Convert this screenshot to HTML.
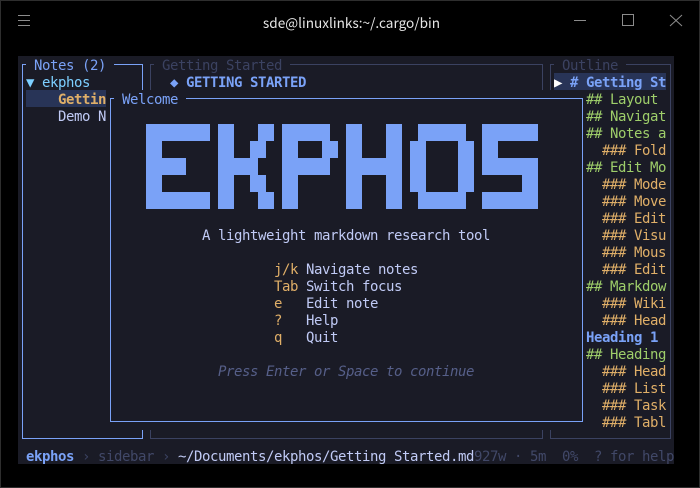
<!DOCTYPE html>
<html><head><meta charset="utf-8"><style>
html,body{margin:0;padding:0;background:#000}
#w{position:relative;width:700px;height:488px;background:#000;overflow:hidden}
#b{position:absolute;left:0;top:0;width:698px;height:486px;border:1px solid #2e2e2e}
#title{position:absolute;left:1.5px;width:700px;top:12px;text-align:center;color:#e6e6e6;font:13.6px/20px "Noto Sans CJK SC","DejaVu Sans",sans-serif}
#t{position:absolute;left:18px;top:56px;width:656px;height:408px;background:#1a1b26;font-family:"DejaVu Sans Mono",monospace;font-size:14px;letter-spacing:-0.43px;line-height:21px;color:#c0caf5}
#t i{position:absolute;display:block}
.x{white-space:pre;font-style:normal;font-weight:normal;height:17px}
.bd{font-weight:bold!important}
.bl{color:#7aa2f7}.g{color:#9ece6a}.o{color:#e0af68}.d{color:#3b4261}.m{color:#565f89}
.l{background:#7aa2f7}.k{background:#3b4261}.p{background:#7aa2f7}
</style></head><body><div id="w"><div id="b"></div>
<svg width="700" height="56" style="position:absolute;left:0;top:0" fill="none" stroke="#8c8c8c" stroke-width="1">
<path d="M18 15.5H30M18 20.5H30M18 25.5H30"/>
<path d="M574 20.5H586"/>
<path d="M622.5 14.5H633.5V25.5H622.5Z"/>
<path d="M670 15L682 26M682 15L670 26"/>
</svg>
<div id="title">sde@linuxlinks:~/.cargo/bin</div>
<div id="t">
<i class="l" style="left:4px;top:8px;width:1px;height:375px"></i>
<i class="l" style="left:4px;top:8px;width:4px;height:1px"></i>
<i class="l" style="left:96px;top:8px;width:29px;height:1px"></i>
<i class="l" style="left:124px;top:8px;width:1px;height:26px"></i>
<i class="l" style="left:4px;top:382px;width:121px;height:1px"></i>
<i class="l" style="left:124px;top:374px;width:1px;height:9px"></i>
<i class="k" style="left:132px;top:8px;width:1px;height:26px"></i>
<i class="k" style="left:132px;top:8px;width:4px;height:1px"></i>
<i class="k" style="left:272px;top:8px;width:253px;height:1px"></i>
<i class="k" style="left:524px;top:8px;width:1px;height:26px"></i>
<i class="k" style="left:132px;top:374px;width:1px;height:9px"></i>
<i class="k" style="left:132px;top:382px;width:393px;height:1px"></i>
<i class="k" style="left:524px;top:374px;width:1px;height:9px"></i>
<i class="k" style="left:532px;top:8px;width:1px;height:26px"></i>
<i class="k" style="left:532px;top:8px;width:4px;height:1px"></i>
<i class="k" style="left:608px;top:8px;width:45px;height:1px"></i>
<i class="k" style="left:652px;top:8px;width:1px;height:375px"></i>
<i class="k" style="left:532px;top:374px;width:1px;height:9px"></i>
<i class="k" style="left:532px;top:382px;width:121px;height:1px"></i>
<i style="left:8px;top:34px;width:80px;height:17px;background:#283457"></i>
<i style="left:536px;top:17px;width:112px;height:17px;background:#283457"></i>
<i class="x bl" style="left:16px;top:0">Notes (2)</i>
<i class="x d" style="left:144px;top:0">Getting Started</i>
<i class="x d" style="left:544px;top:0">Outline</i>
<i class="x" style="left:8px;top:17px;color:#7dcfff">▼</i>
<i class="x" style="left:24px;top:17px;color:#7dcfff">ekphos</i>
<i class="x o bd" style="left:40px;top:34px">Gettin</i>
<i class="x" style="left:40px;top:51px">Demo N</i>
<i class="x bl bd" style="left:152px;top:17px">◆</i>
<i class="x bl bd" style="left:168px;top:17px">GETTING STARTED</i>
<i class="x" style="left:536px;top:17px;color:#fff">▶</i>
<i class="x bl bd" style="left:552px;top:17px"># Getting St</i>
<i class="x g" style="left:568px;top:34px">## Layout</i>
<i class="x g" style="left:568px;top:51px">## Navigat</i>
<i class="x g" style="left:568px;top:68px">## Notes a</i>
<i class="x o" style="left:584px;top:85px">### Fold</i>
<i class="x g" style="left:568px;top:102px">## Edit Mo</i>
<i class="x o" style="left:584px;top:119px">### Mode</i>
<i class="x o" style="left:584px;top:136px">### Move</i>
<i class="x o" style="left:584px;top:153px">### Edit</i>
<i class="x o" style="left:584px;top:170px">### Visu</i>
<i class="x o" style="left:584px;top:187px">### Mous</i>
<i class="x o" style="left:584px;top:204px">### Edit</i>
<i class="x g" style="left:568px;top:221px">## Markdow</i>
<i class="x o" style="left:584px;top:238px">### Wiki</i>
<i class="x o" style="left:584px;top:255px">### Head</i>
<i class="x bl bd" style="left:568px;top:272px">Heading 1</i>
<i class="x g" style="left:568px;top:289px">## Heading</i>
<i class="x o" style="left:584px;top:306px">### Head</i>
<i class="x o" style="left:584px;top:323px">### List</i>
<i class="x o" style="left:584px;top:340px">### Task</i>
<i class="x o" style="left:584px;top:357px">### Tabl</i>
<i style="left:88px;top:34px;width:480px;height:340px;background:#1a1b26"></i>
<i class="l" style="left:92px;top:42px;width:1px;height:324px"></i>
<i class="l" style="left:92px;top:42px;width:4px;height:1px"></i>
<i class="l" style="left:168px;top:42px;width:397px;height:1px"></i>
<i class="l" style="left:564px;top:42px;width:1px;height:324px"></i>
<i class="l" style="left:92px;top:365px;width:473px;height:1px"></i>
<i class="x bl" style="left:104px;top:34px">Welcome</i>
<i class="p" style="left:128px;top:68px;width:64px;height:17px"></i>
<i class="p" style="left:128px;top:85px;width:16px;height:17px"></i>
<i class="p" style="left:128px;top:102px;width:40px;height:17px"></i>
<i class="p" style="left:128px;top:119px;width:16px;height:17px"></i>
<i class="p" style="left:128px;top:136px;width:64px;height:17px"></i>
<i class="p" style="left:200px;top:68px;width:16px;height:85px"></i>
<i class="p" style="left:240px;top:68px;width:16px;height:17px"></i>
<i class="p" style="left:232px;top:85px;width:16px;height:17px"></i>
<i class="p" style="left:216px;top:102px;width:24px;height:17px"></i>
<i class="p" style="left:232px;top:119px;width:16px;height:17px"></i>
<i class="p" style="left:240px;top:136px;width:16px;height:17px"></i>
<i class="p" style="left:264px;top:68px;width:16px;height:85px"></i>
<i class="p" style="left:264px;top:68px;width:48px;height:17px"></i>
<i class="p" style="left:304px;top:85px;width:16px;height:17px"></i>
<i class="p" style="left:264px;top:102px;width:48px;height:17px"></i>
<i class="p" style="left:328px;top:68px;width:16px;height:85px"></i>
<i class="p" style="left:368px;top:68px;width:16px;height:85px"></i>
<i class="p" style="left:328px;top:102px;width:56px;height:17px"></i>
<i class="p" style="left:400px;top:68px;width:48px;height:17px"></i>
<i class="p" style="left:400px;top:136px;width:48px;height:17px"></i>
<i class="p" style="left:392px;top:85px;width:16px;height:51px"></i>
<i class="p" style="left:440px;top:85px;width:16px;height:51px"></i>
<i class="p" style="left:464px;top:68px;width:56px;height:17px"></i>
<i class="p" style="left:464px;top:85px;width:16px;height:17px"></i>
<i class="p" style="left:464px;top:102px;width:56px;height:17px"></i>
<i class="p" style="left:504px;top:119px;width:16px;height:17px"></i>
<i class="p" style="left:464px;top:136px;width:56px;height:17px"></i>
<i class="x" style="left:184px;top:170px">A lightweight markdown research tool</i>
<i class="x o" style="left:256px;top:204px">j/k</i><i class="x" style="left:288px;top:204px">Navigate notes</i>
<i class="x o" style="left:256px;top:221px">Tab</i><i class="x" style="left:288px;top:221px">Switch focus</i>
<i class="x o" style="left:256px;top:238px">e</i><i class="x" style="left:288px;top:238px">Edit note</i>
<i class="x o" style="left:256px;top:255px">?</i><i class="x" style="left:288px;top:255px">Help</i>
<i class="x o" style="left:256px;top:272px">q</i><i class="x" style="left:288px;top:272px">Quit</i>
<i class="x m" style="left:200px;top:306px;font-style:italic">Press Enter or Space to continue</i>
<i class="x bl bd" style="left:8px;top:391px">ekphos</i>
<i class="x d" style="left:64px;top:391px">›</i>
<i class="x" style="left:80px;top:391px;color:#414868">sidebar</i>
<i class="x d" style="left:144px;top:391px">›</i>
<i class="x" style="left:160px;top:391px">~/Documents/ekphos/Getting Started.md</i>
<i class="x" style="left:456px;top:391px;color:#414868">927w · 5m  0%  ? for help</i>
</div></div></body></html>
